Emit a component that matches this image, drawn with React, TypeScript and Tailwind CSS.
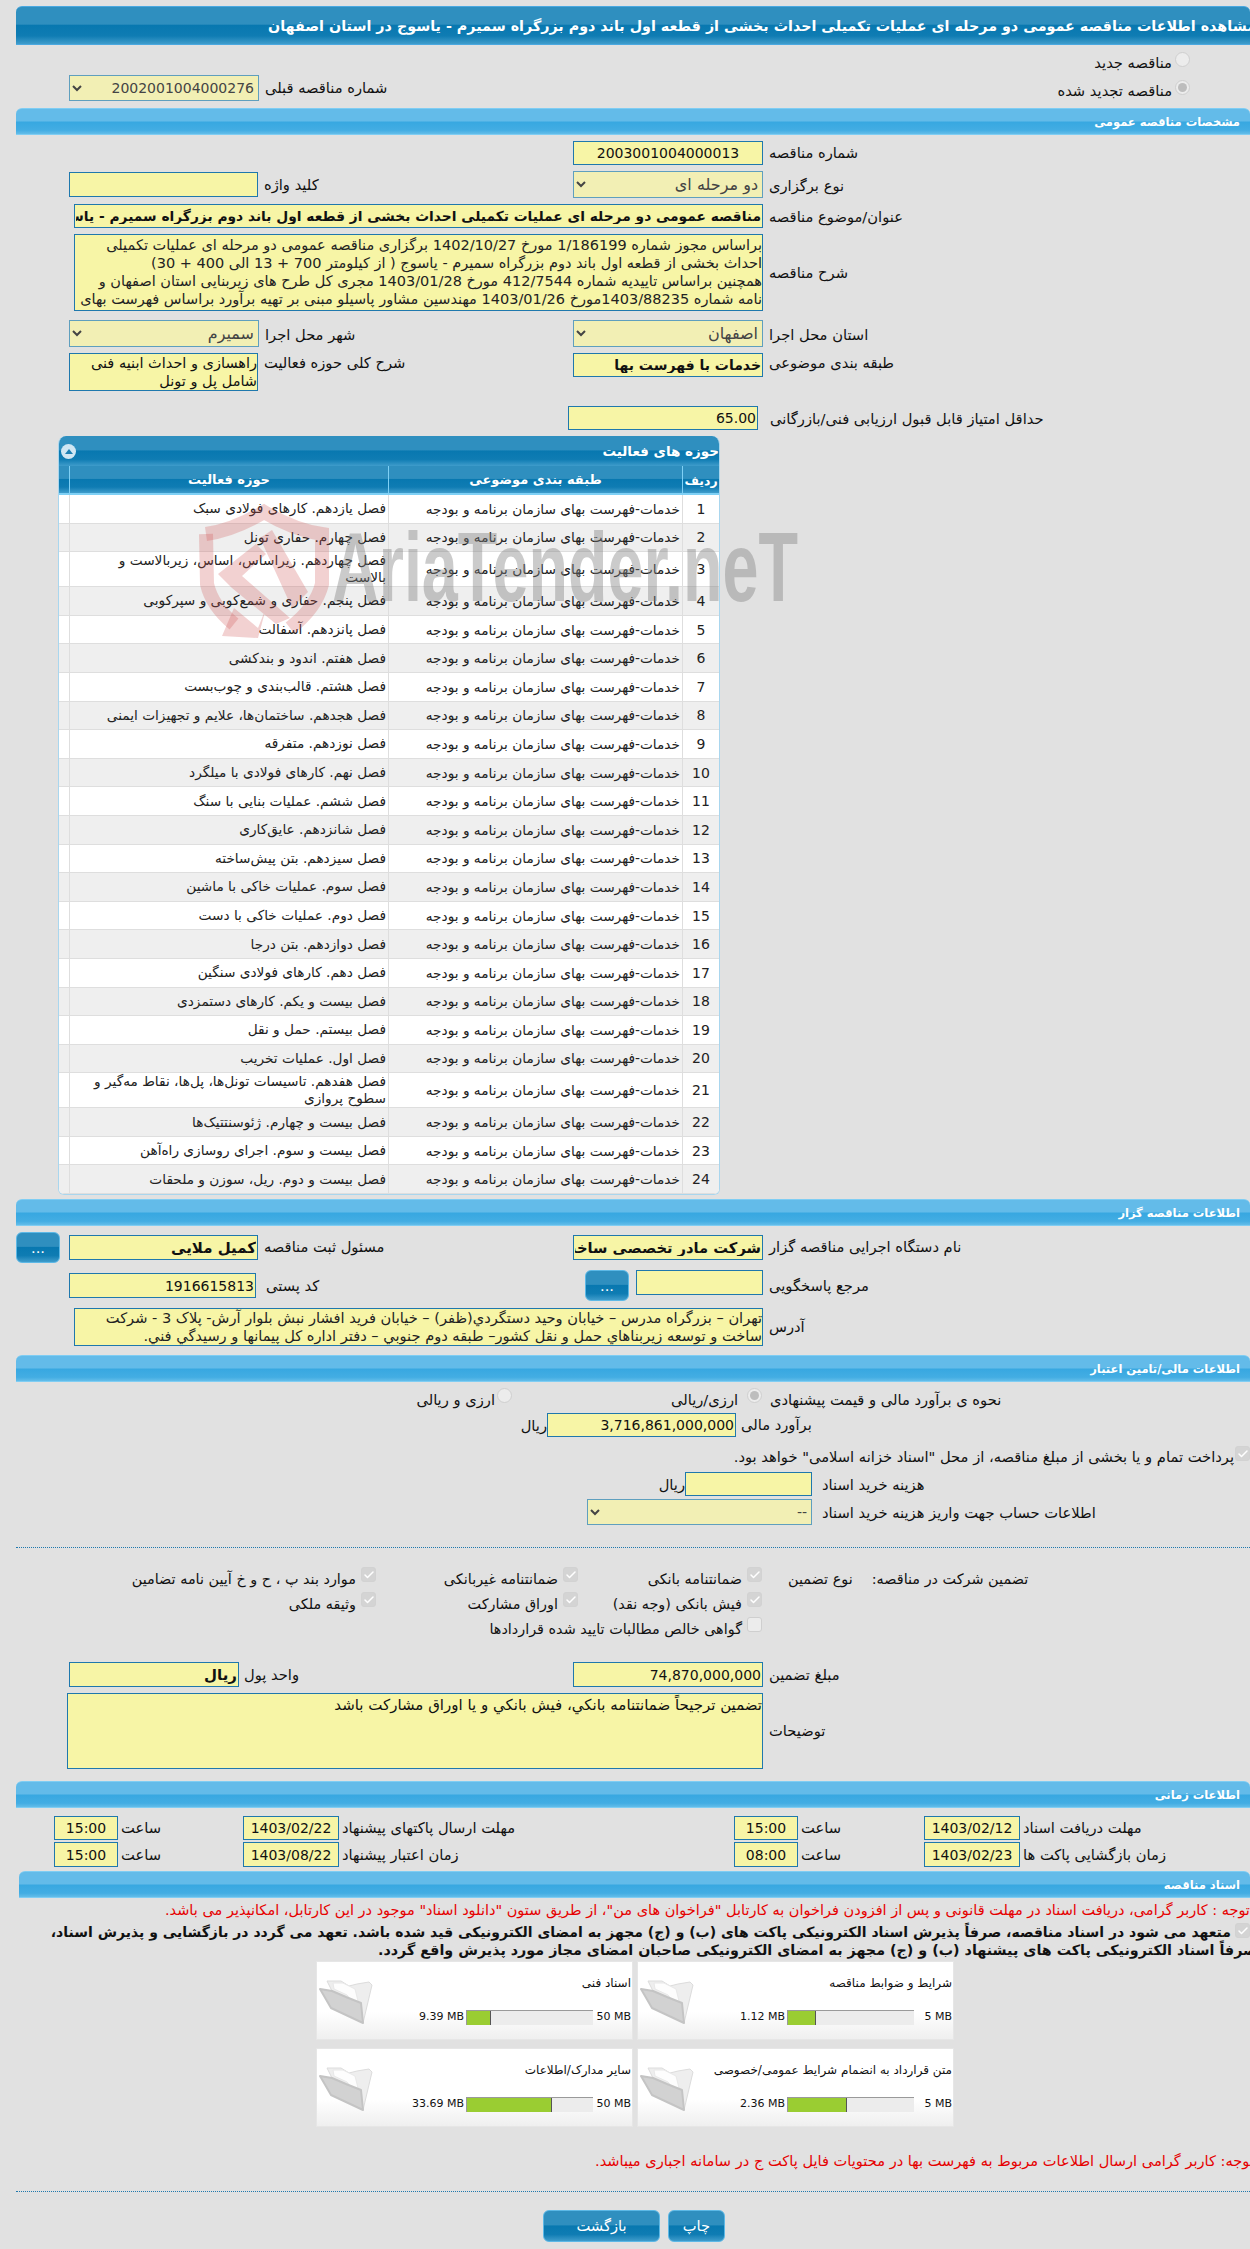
import { Check } from 'lucide-react';

const ACTIVITIES = [
  'فصل یازدهم. کارهای فولادی سبک',
  'فصل چهارم. حفاری تونل',
  'فصل چهاردهم. زیراساس، اساس، زیربالاست  و بالاست',
  'فصل پنجم. حفاری و شمع‌کوبی و سپرکوبی',
  'فصل پانزدهم. آسفالت',
  'فصل هفتم. اندود و بندکشی',
  'فصل هشتم. قالب‌بندی و چوب‌بست',
  'فصل هجدهم. ساختمان‌ها، علایم و تجهیزات ایمنی',
  'فصل نوزدهم. متفرقه',
  'فصل نهم. کارهای فولادی با میلگرد',
  'فصل ششم. عملیات بنایی با سنگ',
  'فصل شانزدهم. عایق‌کاری',
  'فصل سیزدهم. بتن پیش‌ساخته',
  'فصل سوم. عملیات خاکی با ماشین',
  'فصل دوم. عملیات خاکی با دست',
  'فصل دوازدهم. بتن درجا',
  'فصل دهم. کارهای فولادی سنگین',
  'فصل بیست و یکم. کارهای دستمزدی',
  'فصل بیستم. حمل و نقل',
  'فصل اول. عملیات تخریب',
  'فصل هفدهم. تاسیسات تونل‌ها، پل‌ها، نقاط مه‌گیر و سطوح پروازی',
  'فصل بیست و چهارم. ژئوسنتتیک‌ها',
  'فصل بیست و سوم. اجرای روسازی راه‌آهن',
  'فصل بیست و دوم. ریل، سوزن و ملحقات',
];

const DOCS = [
  { title: 'شرایط و ضوابط مناقصه', size: 1.12, max: 5 },
  { title: 'اسناد فنی', size: 9.39, max: 50 },
  { title: 'متن قرارداد به انضمام شرایط عمومی/خصوصی', size: 2.36, max: 5 },
  { title: 'سایر مدارک/اطلاعات', size: 33.69, max: 50 },
];

const BOX = 'border border-[#1f78ad] bg-[#f7f5a6] outline-none';
const DARK =
  'bg-[linear-gradient(180deg,#2f8fbf_0%,#2f8fbf_46%,#0878b0_50%,#0f7cb3_78%,#3f9ccb_100%)]';
const LIGHT =
  'bg-[linear-gradient(180deg,#63bbe9_0%,#63bbe9_46%,#38a8e1_54%,#43ade3_85%,#63bde9_100%)]';

function Label({ children, className = '' }: { children: React.ReactNode; className?: string }) {
  return (
    <span dir="rtl" className={`shrink-0 whitespace-nowrap ${className}`}>
      {children}
    </span>
  );
}

function Section({ title, className = 'ml-[16px]' }: { title: string; className?: string }) {
  return (
    <div
      dir="rtl"
      className={`${className} ${LIGHT} flex h-[27px] items-center rounded-t-[6px] border-y border-[#7fcdf3] pr-[10px] text-[11.5px] font-bold text-white`}
    >
      {title}
    </div>
  );
}

function TextBox({ value, className }: { value: string; className: string }) {
  return <input readOnly dir="rtl" value={value} className={`${BOX} shrink-0 px-[1px] text-[14px] ${className}`} />;
}

function Select({ value, className }: { value: string; className: string }) {
  return (
    <select
      disabled
      dir="rtl"
      className={`shrink-0 border border-[#5f9fbe] bg-[#f2efb4] text-[#444] ${className}`}
      defaultValue={value}
    >
      <option value={value}>{value}</option>
    </select>
  );
}

function Radio({ on = false }: { on?: boolean }) {
  return (
    <span className="flex size-[15px] shrink-0 items-center justify-center rounded-full border border-[#cfcfcf] bg-[#ececec]">
      {on && <span className="size-[9px] rounded-full bg-[#bdbdbd]" />}
    </span>
  );
}

function Tick({ on = true }: { on?: boolean }) {
  return (
    <span
      className={`flex size-[15px] shrink-0 items-center justify-center rounded-[3px] border ${
        on ? 'border-[#d2d2d2] bg-[#d4d4d4]' : 'border-[#cfcfcf] bg-[#ececec]'
      }`}
    >
      {on && <Check size={12} strokeWidth={3} className="text-white" />}
    </span>
  );
}

function BlueButton({ label, className }: { label: string; className: string }) {
  return (
    <button
      type="button"
      className={`${DARK} shrink-0 rounded-[6px] border border-[#5cb8e6] text-white ${className}`}
    >
      {label}
    </button>
  );
}

function Row({
  left,
  right,
  className = '',
}: {
  left?: React.ReactNode;
  right?: React.ReactNode;
  className?: string;
}) {
  return (
    <div className={`flex ${className}`}>
      <div className="flex w-[573px] shrink-0 items-start pl-[69px]">{left}</div>
      <div className="flex items-start">{right}</div>
    </div>
  );
}

function Watermark() {
  return (
    <div aria-hidden="true" className="pointer-events-none absolute left-[198px] top-[500px] h-[145px] w-[610px]">
      <svg width="132" height="145" viewBox="0 0 132 145" className="absolute left-0 top-0" fill="none">
        <path
          d="M8 34 Q36 30 66 12 Q96 30 124 34 L124 84 Q118 108 92 128"
          stroke="#cf5656"
          strokeOpacity="0.27"
          strokeWidth="14"
        />
        <path d="M8 34 L9 84 Q14 106 36 124" stroke="#cf5656" strokeOpacity="0.27" strokeWidth="14" />
        <path
          d="M20 74 L58 44 L68 54 L44 76 L92 118 L78 124 L34 88 Z M62 38 L74 30 L110 92 L94 108 Z M36 108 L60 128 L68 108 L60 138 L24 136 Z"
          fill="#cf5656"
          fillOpacity="0.27"
        />
      </svg>
      <span className="absolute left-[134px] top-[12px] origin-top-left scale-x-[0.66] whitespace-nowrap font-['Liberation_Sans',sans-serif] text-[98px] font-bold leading-[110px] text-[#7c7c7c]/40">
        AriaTender.neT
      </span>
    </div>
  );
}

function ActivityPanel() {
  return (
    <div className="ml-[58px] mt-[6px] w-[662px] overflow-hidden rounded-t-[8px] rounded-b-[6px] border-x border-b border-[#a9d6ee] bg-white text-[13.7px] text-[#222]">
      <div dir="rtl" className={`${DARK} flex h-[30px] items-center justify-between pl-[2px] text-[13.5px] font-bold text-white`}>
        <span>حوزه های فعالیت</span>
        <span className="flex size-[15px] items-center justify-center rounded-full bg-[#cfe6f3]">
          <span className="size-0 border-x-[4px] border-b-[5px] border-x-transparent border-b-[#1d7fb3]" />
        </span>
      </div>
      <div dir="rtl" className={`${DARK} flex h-[29px] border-b-2 border-[#7fd0f5] text-[13px] font-bold text-white`}>
        <div className="flex w-[37px] items-center justify-center border-l border-[#7fd0f5] pt-[2px] text-[12.5px]">ردیف</div>
        <div className="flex w-[294px] items-center justify-center border-l border-[#7fd0f5]">طبقه بندی موضوعی</div>
        <div className="flex w-[319px] items-center justify-center border-l border-[#7fd0f5]">حوزه فعالیت</div>
      </div>
      {ACTIVITIES.map((name, i) => (
        <div
          key={name}
          dir="rtl"
          className={`flex border-b border-[#dedede] ${i === 2 || i === 20 ? 'h-[35px]' : 'h-[28.6px]'} ${
            i % 2 ? 'bg-[#efefef]' : 'bg-white'
          }`}
        >
          <div className="flex w-[37px] items-center justify-center border-l border-[#dedede] text-[14px]">{i + 1}</div>
          <div className="flex w-[294px] items-center border-l border-[#dedede] pr-[2px]">
            خدمات-فهرست بهای سازمان برنامه و بودجه
          </div>
          <div className="flex w-[319px] items-center border-l border-[#dedede] pl-[10px] pr-[2px] leading-[17px]">{name}</div>
        </div>
      ))}
    </div>
  );
}

function FolderIcon() {
  return (
    <svg width="56" height="48" viewBox="0 0 56 48" className="ml-[2px] mt-[2px] shrink-0" strokeLinejoin="round">
      <path d="M8 2 L22 2 L30 7 L38 5 L50 3 L53 6 L44 44 L27 18 L13 12 Z" fill="#eeeeee" stroke="#dcdcdc" />
      <path d="M14 4 L24 4 L36 10 L42 34 L28 16 L15 10 Z" fill="#fdfdfd" stroke="#e8e8e8" />
      <path d="M1 10 L13 12 L27 18 L42 24 L44 44 L12 29 Z" fill="#d2d2d2" stroke="#c4c4c4" strokeWidth="2" />
    </svg>
  );
}

function DocCard({ title, size, max }: { title: string; size: number; max: number }) {
  return (
    <div className="flex h-[79px] border border-[#e6e6e6] bg-[linear-gradient(180deg,#ffffff_0%,#ffffff_65%,#efefef_100%)] pt-[15px]">
      <FolderIcon />
      <div className="-mt-[15px] flex flex-1 flex-col items-end pr-[1px] pt-[12px] text-[11px] text-[#111]">
        <span dir="rtl" className="whitespace-nowrap text-[12px]">
          {title}
        </span>
        <div className="mt-[16px] flex items-center gap-[2px]">
          <span className="whitespace-nowrap">{size} MB</span>
          <div className="h-[15px] w-[127px] border-l border-t border-[#9a9a9a] bg-[#ececec]">
            <div
              className="h-full border-r border-[#555] bg-[#9acd32]"
              style={{ width: `${(size / max) * 100}%` }}
            />
          </div>
          <span className="w-[36px] whitespace-nowrap text-right">{max} MB</span>
        </div>
      </div>
    </div>
  );
}

function TimeRow({
  a,
  aDate,
  aTime,
  b,
  bDate,
  bTime,
  className,
}: {
  a: string;
  aDate: string;
  aTime: string;
  b: string;
  bDate: string;
  bTime: string;
  className: string;
}) {
  const inputCls = 'h-full text-center';
  return (
    <div className={`grid grid-cols-[189px_491px_190px_1fr] pl-[54px] ${className}`}>
      <div className="flex items-center gap-[3px]">
        <TextBox value={bTime} className={`${inputCls} w-[64px]`} />
        <Label>ساعت</Label>
      </div>
      <div className="flex items-center gap-[3px]">
        <TextBox value={bDate} className={`${inputCls} w-[96px]`} />
        <Label>{b}</Label>
      </div>
      <div className="flex items-center gap-[3px]">
        <TextBox value={aTime} className={`${inputCls} w-[64px]`} />
        <Label>ساعت</Label>
      </div>
      <div className="flex items-center gap-[3px]">
        <TextBox value={aDate} className={`${inputCls} w-[96px]`} />
        <Label>{a}</Label>
      </div>
    </div>
  );
}

export default function App() {
  return (
    <div className="relative h-[2249px] w-[1250px] overflow-hidden bg-[#e1e1e1] pt-[6px] font-['DejaVu_Sans',sans-serif] text-[14.7px] leading-[18px] text-[#111]">
      <div className={`${DARK} ml-[16px] flex h-[39px] items-center rounded-t-[6px] border-y border-[#4aa8e0] pl-[252px] text-[14.3px] font-bold text-white`}>
        <span dir="rtl" className="shrink-0 whitespace-nowrap">
          مشاهده اطلاعات مناقصه عمومی دو مرحله ای عملیات تکمیلی احداث بخشی از قطعه اول باند دوم بزرگراه سمیرم - یاسوج در استان اصفهان
        </span>
      </div>

      <div className="mt-[7px] flex h-[18px] items-start justify-end gap-[3px] pr-[60px]">
        <Label className="mt-[2px]">مناقصه جدید</Label>
        <Radio />
      </div>
      <div className="mt-[5px] flex h-[26px] justify-between pl-[69px] pr-[60px]">
        <div className="flex items-center gap-[6px]">
          <Select value="2002001004000276" className="h-[26px] w-[190px] text-[14px]" />
          <Label>شماره مناقصه قبلی</Label>
        </div>
        <div className="flex items-start gap-[3px] pt-[5px]">
          <Label className="mt-[2px]">مناقصه تجدید شده</Label>
          <Radio on />
        </div>
      </div>

      <Section title="مشخصات مناقصه عمومی" className="ml-[16px] mt-[7px]" />

      <Row
        className="mt-[6px] h-[24px]"
        right={
          <>
            <TextBox value="2003001004000013" className="h-[24px] w-[190px] text-center" />
            <Label className="ml-[6px] mt-[3px]">شماره مناقصه</Label>
          </>
        }
      />
      <Row
        className="mt-[6px] h-[27px]"
        left={
          <>
            <TextBox value="" className="mt-[1px] h-[25px] w-[189px]" />
            <Label className="ml-[6px] mt-[5px]">کلید واژه</Label>
          </>
        }
        right={
          <>
            <Select value="دو مرحله ای" className="h-[27px] w-[190px] text-[16px]" />
            <Label className="ml-[6px] mt-[6px]">نوع برگزاری</Label>
          </>
        }
      />
      <div className="mt-[6px] flex h-[24px] pl-[74px]">
        <TextBox
          value="مناقصه عمومی دو مرحله ای عملیات تکمیلی احداث بخشی از قطعه اول باند دوم بزرگراه سمیرم - یاسوج در استان اصفهان"
          className="h-[24px] w-[689px] !text-[13.8px] font-bold"
        />
        <Label className="ml-[6px] mt-[4px]">عنوان/موضوع مناقصه</Label>
      </div>
      <div className="mt-[6px] flex h-[77px] items-center pl-[74px]">
        <div dir="rtl" className={`${BOX} h-[77px] w-[689px] overflow-hidden pt-[1px] text-[14.5px] text-[#222]`}>
          <div className="whitespace-nowrap">براساس مجوز شماره 1/186199 مورخ 1402/10/27 برگزاری مناقصه عمومی دو  مرحله ای عملیات تکمیلی</div>
          <div className="whitespace-nowrap">احداث بخشی از قطعه اول باند دوم بزرگراه سمیرم - یاسوج ( از کیلومتر 700 + 13 الی 400 + 30)</div>
          <div className="whitespace-nowrap">همچنین براساس تاییدیه شماره 412/7544 مورخ 1403/01/28 مجری کل طرح های زیربنایی استان اصفهان و</div>
          <div className="whitespace-nowrap">نامه شماره 1403/88235مورخ 1403/01/26 مهندسین مشاور پاسیلو مبنی بر تهیه برآورد براساس فهرست بهای</div>
        </div>
        <Label className="ml-[6px]">شرح مناقصه</Label>
      </div>
      <Row
        className="mt-[9px] h-[27px]"
        left={
          <>
            <Select value="سمیرم" className="h-[27px] w-[190px] text-[16px]" />
            <Label className="ml-[6px] mt-[6px]">شهر محل اجرا</Label>
          </>
        }
        right={
          <>
            <Select value="اصفهان" className="h-[27px] w-[190px] text-[16px]" />
            <Label className="ml-[6px] mt-[6px]">استان محل اجرا</Label>
          </>
        }
      />
      <Row
        className="mt-[6px] h-[38px]"
        left={
          <>
            <div dir="rtl" className={`${BOX} h-[38px] w-[189px] shrink-0 text-[14.5px]`}>
              <div>راهسازی و احداث ابنیه فنی شامل پل و تونل</div>
            </div>
            <Label className="ml-[6px] mt-[1px]">شرح کلی حوزه فعالیت</Label>
          </>
        }
        right={
          <>
            <TextBox value="خدمات با فهرست بها" className="h-[24px] w-[190px] font-bold" />
            <Label className="ml-[6px] mt-[1px]">طبقه بندی موضوعی</Label>
          </>
        }
      />
      <div className="mt-[15px] flex h-[24px] pl-[568px]">
        <TextBox value="65.00" className="h-[24px] w-[190px]" />
        <Label className="ml-[12px] mt-[4px]">حداقل امتیاز قابل قبول ارزیابی فنی/بازرگانی</Label>
      </div>

      <ActivityPanel />
      <Watermark />

      <Section title="اطلاعات مناقصه گزار" className="ml-[16px] mt-[4px]" />
      <div className="mt-[6px] flex h-[31px]">
        <div className="flex w-[573px] shrink-0 items-start pl-[16px]">
          <BlueButton label="..." className="h-[31px] w-[44px]" />
          <TextBox value="کمیل ملایی" className="ml-[9px] mt-[3px] h-[25px] w-[189px] !text-[15px] font-bold" />
          <Label className="ml-[6px] mt-[6px]">مسئول ثبت مناقصه</Label>
        </div>
        <div className="flex items-start">
          <TextBox value="شرکت مادر تخصصی ساخت و توسعه زیربناهای حمل و نقل کشور" className="mt-[3px] h-[25px] w-[190px] !text-[14.7px] font-bold" />
          <Label className="ml-[6px] mt-[6px]">نام دستگاه اجرایی مناقصه گزار</Label>
        </div>
      </div>
      <div className="mt-[7px] flex h-[31px]">
        <div className="flex w-[585px] shrink-0 items-start pl-[69px] pt-[3px]">
          <TextBox value="1916615813" className="h-[25px] w-[187px]" />
          <Label className="ml-[10px] mt-[4px]">کد پستی</Label>
        </div>
        <BlueButton label="..." className="h-[31px] w-[44px]" />
        <TextBox value="" className="ml-[7px] h-[25px] w-[127px]" />
        <Label className="ml-[6px] mt-[7px]">مرجع پاسخگویی</Label>
      </div>
      <div className="mt-[7px] flex h-[37px] items-center pl-[74px]">
        <div dir="rtl" className={`${BOX} h-[38px] w-[689px] overflow-hidden text-[14.6px] text-[#222]`}>
          <div className="whitespace-nowrap">تهران – بزرگراه مدرس – خیابان وحید دستگردي(ظفر) – خیابان فرید افشار نبش بلوار آرش- پلاک 3 -  شرکت</div>
          <div className="whitespace-nowrap">ساخت و توسعه زیربناهاي حمل و نقل کشور– طبقه دوم جنوبي – دفتر اداره کل پیمانها و رسیدگي فني.</div>
        </div>
        <Label className="ml-[6px]">آدرس</Label>
      </div>

      <Section title="اطلاعات مالی/تامین اعتبار" className="ml-[16px] mt-[10px]" />
      <div className="mt-[6px] flex h-[20px] pl-[420px]">
        <Label className="mt-[3px] w-[75px] text-right">ارزی و ریالی</Label>
        <span className="ml-[2px]">
          <Radio />
        </span>
        <Label className="ml-[159px] mt-[3px] w-[74px] text-left">ارزی/ریالی</Label>
        <span className="ml-[2px]">
          <Radio on />
        </span>
        <Label className="ml-[8px] mt-[3px]">نحوه ی برآورد مالی و قیمت پیشنهادی</Label>
      </div>
      <div className="mt-[5px] flex h-[24px] pl-[519px]">
        <Label className="mt-[4px] w-[28px]">ریال</Label>
        <TextBox value="3,716,861,000,000" className="h-[24px] w-[189px]" />
        <Label className="ml-[5px] mt-[3px]">برآورد مالی</Label>
      </div>
      <div className="mt-[9px] flex h-[20px] justify-end gap-[1px]">
        <Label className="mt-[2px]">پرداخت تمام و یا بخشی از مبلغ مناقصه، از محل "اسناد خزانه اسلامی" خواهد بود.</Label>
        <Tick />
      </div>
      <div className="mt-[6px] flex h-[24px] pl-[662px]">
        <Label className="mt-[4px] w-[23px]">ریال</Label>
        <TextBox value="" className="h-[24px] w-[127px]" />
        <Label className="ml-[10px] mt-[4px]">هزینه خرید اسناد</Label>
      </div>
      <div className="mt-[3px] flex h-[26px] pl-[587px]">
        <Select value="--" className="h-[26px] w-[225px] text-[14px]" />
        <Label className="ml-[10px] mt-[5px]">اطلاعات حساب جهت واریز هزینه خرید اسناد</Label>
      </div>
      <div className="ml-[16px] mt-[22px] border-t border-dotted border-[#1f78ad]" />

      <div className="mt-[19px] grid h-[75px] grid-cols-[376px_202px_184px_1fr] grid-rows-[25px_25px_25px] text-[14.4px]">
        <div className="flex justify-end gap-[5px]">
          <Label className="mt-[3px]">موارد بند پ ، ح و خ آیین نامه تضامین</Label>
          <Tick />
        </div>
        <div className="flex justify-end gap-[5px]">
          <Label className="mt-[3px]">ضمانتنامه غیربانکی</Label>
          <Tick />
        </div>
        <div className="flex justify-end gap-[5px]">
          <Label className="mt-[3px]">ضمانتنامه بانکی</Label>
          <Tick />
        </div>
        <div className="flex pl-[26px] pt-[3px]">
          <Label>نوع تضمین</Label>
          <Label className="ml-[19px]">تضمین شرکت در مناقصه:</Label>
        </div>
        <div className="flex justify-end gap-[5px]">
          <Label className="mt-[3px]">وثیقه ملکی</Label>
          <Tick />
        </div>
        <div className="flex justify-end gap-[5px]">
          <Label className="mt-[3px]">اوراق مشارکت</Label>
          <Tick />
        </div>
        <div className="flex justify-end gap-[5px]">
          <Label className="mt-[3px]">فیش بانکی (وجه نقد)</Label>
          <Tick />
        </div>
        <div />
        <div />
        <div className="col-span-2 flex justify-end gap-[5px]">
          <Label className="mt-[3px]">گواهی خالص مطالبات تایید شده قراردادها</Label>
          <Tick on={false} />
        </div>
      </div>

      <Row
        className="mt-[20px] h-[25px]"
        left={
          <>
            <TextBox value="ریال" className="h-[25px] w-[170px] !text-[15px] font-bold" />
            <Label className="ml-[5px] mt-[4px]">واحد پول</Label>
          </>
        }
        right={
          <>
            <TextBox value="74,870,000,000" className="h-[25px] w-[190px]" />
            <Label className="ml-[6px] mt-[4px]">مبلغ تضمین</Label>
          </>
        }
      />
      <div className="mt-[6px] flex h-[76px] items-center pl-[67px]">
        <div dir="rtl" className={`${BOX} h-[76px] w-[696px] pt-[2px] text-[15px]`}>
          تضمین ترجیحاً ضمانتنامه بانکي، فیش بانکي و یا اوراق مشارکت باشد
        </div>
        <Label className="ml-[6px]">توضیحات</Label>
      </div>

      <Section title="اطلاعات زمانی" className="ml-[16px] mt-[12px]" />
      <TimeRow
        className="mt-[8px] h-[24px]"
        a="مهلت دریافت اسناد"
        aDate="1403/02/12"
        aTime="15:00"
        b="مهلت ارسال پاکتهای پیشنهاد"
        bDate="1403/02/22"
        bTime="15:00"
      />
      <TimeRow
        className="mt-[2px] h-[25px]"
        a="زمان بازگشایی پاکت ها"
        aDate="1403/02/23"
        aTime="08:00"
        b="زمان اعتبار پیشنهاد"
        bDate="1403/08/22"
        bTime="15:00"
      />

      <Section title="اسناد مناقصه" className="ml-[19px] mt-[4px]" />
      <div className="mt-[3px] flex pl-[165px] text-[14.5px] text-[#e60000]">
        <Label>توجه : کاربر گرامی، دریافت اسناد در مهلت قانونی و پس از افزودن فراخوان به کارتابل "فراخوان های من"، از طریق ستون "دانلود اسناد" موجود در این کارتابل، امکانپذیر می باشد.</Label>
      </div>
      <div className="mt-[4px] flex h-[18px] justify-end gap-[4px] text-[14px] font-bold">
        <Label>متعهد می شود در اسناد مناقصه، صرفاً پذیرش اسناد الکترونیکی پاکت های (ب) و (ج) مجهز به امضای الکترونیکی قید شده باشد. تعهد می گردد در بازگشایی و پذیرش اسناد،</Label>
        <Tick />
      </div>
      <div className="flex h-[18px] pl-[378px] text-[14.3px] font-bold">
        <Label>صرفاً اسناد الکترونیکی پاکت های پیشنهاد (ب) و (ج) مجهز به امضای الکترونیکی صاحبان امضای مجاز مورد پذیرش واقع گردد.</Label>
      </div>

      <div className="ml-[316px] mt-[2px] grid w-[638px] grid-cols-2 gap-x-[4px] gap-y-[8px]">
        <DocCard {...DOCS[1]} />
        <DocCard {...DOCS[0]} />
        <DocCard {...DOCS[3]} />
        <DocCard {...DOCS[2]} />
      </div>

      <div className="mt-[25px] flex pl-[595px] text-[14.6px] text-[#e60000]">
        <Label>توجه: کاربر گرامی ارسال اطلاعات مربوط به فهرست بها در محتویات فایل پاکت ج در سامانه اجباری میباشد.</Label>
      </div>
      <div className="ml-[16px] mt-[21px] border-t border-dotted border-[#1f78ad]" />
      <div dir="ltr" className="ml-[543px] mt-[18px] flex gap-[8px]">
        <BlueButton label="بازگشت" className="h-[32px] w-[117px]" />
        <BlueButton label="چاپ" className="h-[32px] w-[57px]" />
      </div>
    </div>
  );
}
